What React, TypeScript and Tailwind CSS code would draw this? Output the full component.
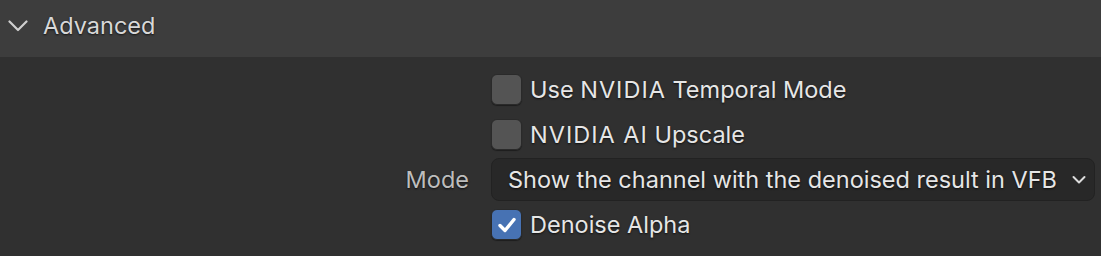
import React from "react";

function Check({ checked }: { checked?: boolean }) {
  return (
    <div
      className={
        "w-[31px] h-[31px] shrink-0 rounded-[6px] border border-[#2a2a2a] flex items-center justify-center shadow-[0_1px_1px_rgba(0,0,0,0.4)] " +
        (checked ? "bg-[#4772b3]" : "bg-[#545454]")
      }
    >
      {checked && (
        <svg width="22" height="22" viewBox="0 0 22 22" fill="none">
          <path d="M4 11.5 L9 16.5 L18 5.5" stroke="#ffffff" strokeWidth="3.4" strokeLinecap="round" strokeLinejoin="round" />
        </svg>
      )}
    </div>
  );
}

const shadow = "[text-shadow:0_1px_2px_rgba(0,0,0,0.7)]";

export default function App() {
  return (
    <div className="w-[1101px] h-[256px] bg-[#303030] overflow-hidden font-['Inter','Noto_Sans',sans-serif]">
      <div className="h-[57px] bg-[#3d3d3d] flex items-center pb-[6px]">
        <svg className="ml-[8px]" width="20" height="12" viewBox="0 0 20 12" fill="none">
          <path d="M1.5 1.5 L10 10 L18.5 1.5" stroke="#cfcfcf" strokeWidth="2.2" strokeLinecap="round" strokeLinejoin="round" />
        </svg>
        <span className={"ml-[15px] text-[23.5px] text-[#d8d8d8] " + shadow}>Advanced</span>
      </div>
      <div className="pt-[17px] flex flex-col">
        <div className="flex h-[31px] items-center pl-[491px]">
          <Check />
          <span className={"ml-[8px] text-[23.5px] text-[#e6e6e6] " + shadow}>
            Use <span className="tracking-[1px]">NVIDIA</span> Temporal Mode
          </span>
        </div>
        <div className="flex h-[31px] items-center pl-[491px] mt-[14px]">
          <Check />
          <span className={"ml-[8px] text-[23.5px] text-[#e6e6e6] " + shadow}>
            <span className="tracking-[1px]">NVIDIA AI</span> Upscale
          </span>
        </div>
        <div className="flex h-[43px] items-center mt-[8px]">
          <div className="w-[469px] text-right">
            <span className={"text-[23.5px] text-[#bdbdbd] " + shadow}>Mode</span>
          </div>
          <div className="ml-[22px] w-[604px] h-[43px] rounded-[8px] bg-[#282828] border border-[#222222] flex items-center pl-[16px] pr-[8px]">
            <span className={"flex-1 text-[23.5px] text-[#e6e6e6] whitespace-nowrap " + shadow}>Show the channel with the denoised result in VFB</span>
            <svg width="14" height="10" viewBox="0 0 14 10" fill="none">
              <path d="M1.5 2 L7 7.5 L12.5 2" stroke="#dcdcdc" strokeWidth="2" strokeLinecap="round" strokeLinejoin="round" />
            </svg>
          </div>
        </div>
        <div className="flex h-[31px] items-center pl-[491px] mt-[8px]">
          <Check checked />
          <span className={"ml-[8px] text-[23.5px] text-[#e6e6e6] " + shadow}>Denoise Alpha</span>
        </div>
      </div>
    </div>
  );
}
